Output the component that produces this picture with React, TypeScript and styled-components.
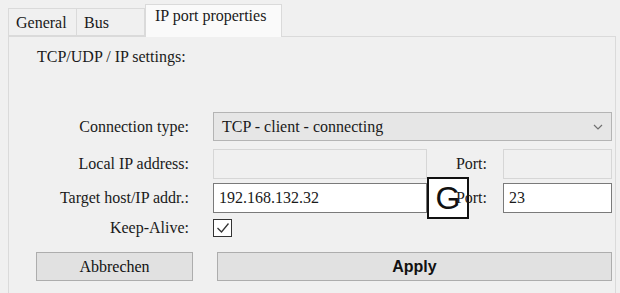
import React from "react";
import styled, { createGlobalStyle } from "styled-components";

const Global = createGlobalStyle`
  html, body {
    margin: 0;
    padding: 0;
    background: #f0f0f0;
    font-family: "Liberation Serif", serif;
  }
  * { box-sizing: border-box; }
`;

const Window = styled.div`
  position: relative;
  width: 620px;
  height: 293px;
  overflow: hidden;
  background: #f0f0f0;
  padding: 4px 4px 0 8px;
  display: flex;
  flex-direction: column;
  font-family: "Liberation Serif", serif;
  font-size: 16px;
  color: #1a1a1a;
`;

const TabStrip = styled.div`
  display: flex;
  align-items: flex-end;
  height: 32px;
  position: relative;
  z-index: 1;
`;

const Tab = styled.div<{ $active?: boolean; $w: number }>`
  width: ${(p) => p.$w}px;
  height: ${(p) => (p.$active ? 33 : 28)}px;
  margin-bottom: ${(p) => (p.$active ? -1 : 0)}px;
  padding: ${(p) => (p.$active ? "2px 0 0 9px" : "5px 0 0 7px")};
  background: ${(p) => (p.$active ? "#fafafa" : "#f0f0f0")};
  border: 1px solid #dadada;
  border-bottom: ${(p) => (p.$active ? "none" : "1px solid #dadada")};
  border-left: ${(p) => (p.$active ? "1px solid #dadada" : "none")};
  font-family: "Liberation Serif", serif;
  white-space: nowrap;
  &:first-child { border-left: 1px solid #dadada; }
`;

const Panel = styled.div`
  flex: 1;
  border: 1px solid #dadada;
  border-bottom: none;
  padding: 11px 0 0 27px;
  display: flex;
  flex-direction: column;
`;

const Header = styled.div`
  height: 64px;
  padding-left: 1px;
  line-height: 18px;
  font-family: "Liberation Serif", serif;
`;

const Row = styled.div<{ $h: number; $top: number }>`
  display: grid;
  grid-template-columns: 157px 234px 76px 109px;
  height: ${(p) => p.$h}px;
  margin-top: ${(p) => p.$top}px;
  align-items: center;
`;

const Label = styled.div<{ $col?: number }>`
  position: relative;
  z-index: 3;
  grid-column: ${(p) => p.$col ?? 1};
  text-align: right;
  padding-right: ${(p) => (p.$col ? 16 : 4)}px;
  font-family: "Liberation Serif", serif;
  white-space: nowrap;
`;

const Combo = styled.div`
  grid-column: 2 / 5;
  margin-left: 20px;
  height: 29px;
  background: #e6e6e6;
  border: 1px solid #b4b4b4;
  display: flex;
  align-items: center;
  justify-content: space-between;
  padding: 0 8px 0 8px;
  font-family: "Liberation Serif", serif;
`;

const Field = styled.div<{ $disabled?: boolean; $lead?: boolean }>`
  height: 30px;
  margin-left: ${(p) => (p.$lead ? 20 : 0)}px;
  background: ${(p) => (p.$disabled ? "#f0f0f0" : "#ffffff")};
  border: 1px solid ${(p) => (p.$disabled ? "#d6d6d6" : "#7a7a7a")};
  display: flex;
  align-items: center;
  padding-left: 5px;
  font-family: "Liberation Serif", serif;
`;

const CheckBox = styled.div`
  grid-column: 2;
  margin-left: 20px;
  width: 19px;
  height: 18px;
  background: #ffffff;
  border: 1px solid #333333;
  display: flex;
  align-items: center;
  justify-content: center;
`;

const Button = styled.div<{ $primary?: boolean }>`
  grid-column: ${(p) => (p.$primary ? "2 / 5" : "1")};
  margin-left: ${(p) => (p.$primary ? 24 : 0)}px;
  height: 29px;
  background: #e1e1e1;
  border: 1px solid #adadad;
  display: flex;
  align-items: center;
  justify-content: center;
  font-family: ${(p) => (p.$primary ? `"Liberation Sans", sans-serif` : `"Liberation Serif", serif`)};
  font-weight: ${(p) => (p.$primary ? 700 : 400)};
  font-size: 16px;
  color: #111;
`;

const GBadge = styled.div`
  position: absolute;
  left: 427px;
  top: 177px;
  width: 42px;
  height: 42px;
  border: 2px solid #111;
  background: #ffffff;
  display: flex;
  align-items: center;
  justify-content: center;
  font-family: "Liberation Sans", sans-serif;
  font-size: 32px;
  color: #111;
  line-height: 1;
  z-index: 2;
`;

export default function App() {
  return (
    <>
      <Global />
      <Window>
        <TabStrip>
          <Tab $w={69}>General</Tab>
          <Tab $w={68}>Bus</Tab>
          <Tab $active $w={137}>IP port properties</Tab>
        </TabStrip>
        <Panel>
          <Header>TCP/UDP / IP settings:</Header>
          <Row $h={29} $top={0}>
            <Label>Connection type:</Label>
            <Combo>
              <span>TCP - client - connecting</span>
              <svg width="10" height="6" viewBox="0 0 10 6">
                <path d="M1 1 L5 5 L9 1" fill="none" stroke="#707070" strokeWidth="1.2" />
              </svg>
            </Combo>
          </Row>
          <Row $h={30} $top={8}>
            <Label>Local IP address:</Label>
            <Field $disabled $lead />
            <Label $col={3}>Port:</Label>
            <Field $disabled />
          </Row>
          <Row $h={30} $top={4}>
            <Label>Target host/IP addr.:</Label>
            <Field $lead>192.168.132.32</Field>
            <Label $col={3}>Port:</Label>
            <Field>23</Field>
          </Row>
          <Row $h={18} $top={6}>
            <Label>Keep-Alive:</Label>
            <CheckBox>
              <svg width="14" height="12" viewBox="0 0 14 12">
                <path d="M1.5 6 L5.5 10 L12.5 1.5" fill="none" stroke="#333" strokeWidth="1.3" />
              </svg>
            </CheckBox>
          </Row>
          <Row $h={29} $top={15}>
            <Button>Abbrechen</Button>
            <Button $primary>Apply</Button>
          </Row>
        </Panel>
        <GBadge>G</GBadge>
      </Window>
    </>
  );
}
